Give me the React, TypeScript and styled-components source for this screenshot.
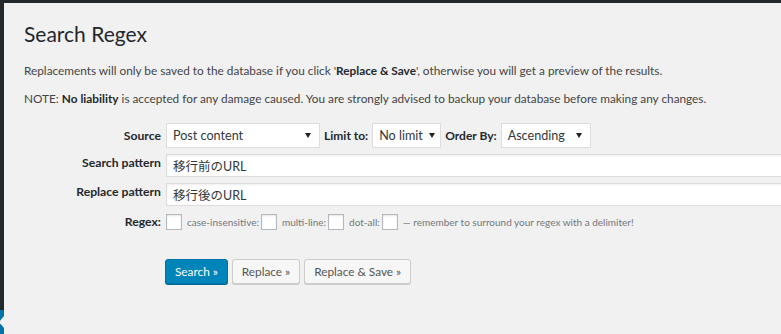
import styled, { createGlobalStyle } from "styled-components";

const GlobalStyle = createGlobalStyle`
  html, body {
    margin: 0;
    height: 100%;
    overflow: hidden;
    background: #f1f1f1;
  }
  body {
    font-family: Lato, "Noto Sans CJK JP", sans-serif;
    font-size: 11.8px;
    color: #444;
  }
  #root {
    height: 100%;
  }
`;

const Page = styled.div`
  display: flex;
  flex-direction: column;
  height: 100%;
`;

const AdminBar = styled.div`
  height: 3px;
  background: #23282d;
  flex: none;
`;

const Body = styled.div`
  display: flex;
  flex: 1;
  min-height: 0;
`;

const Sidebar = styled.div`
  width: 4px;
  flex: none;
  background: #23282d;
  display: flex;
  flex-direction: column;
  justify-content: flex-end;
`;

const CurrentItem = styled.div`
  height: 24px;
  background: #0073aa;
  position: relative;

  &::after {
    content: "";
    position: absolute;
    right: 0;
    top: 6px;
    border: 6px solid transparent;
    border-right-color: #f1f1f1;
    border-left-width: 0;
    border-right-width: 5px;
  }
`;

const Content = styled.main`
  flex: 1;
  min-width: 0;
  padding: 0 0 0 20px;
  overflow: hidden;
`;

const Title = styled.h1`
  margin: 17px 0 14px;
  font-size: 21px;
  font-weight: 400;
  line-height: 28px;
  color: #23282d;
`;

const Note = styled.p`
  margin: 0 0 10px;
  line-height: 18px;

  strong {
    font-weight: 700;
    color: #23282d;
  }
`;

const Form = styled.div`
  display: grid;
  grid-template-columns: 137px 1fr;
  column-gap: 5px;
  row-gap: 6px;
  margin-top: 15px;
`;

const Label = styled.label<{ $shift?: number }>`
  justify-self: end;
  align-self: start;
  padding-top: ${({ $shift }) => $shift ?? 0}px;
  font-size: 12.2px;
  font-weight: 700;
  color: #23282d;
  line-height: 18px;
  white-space: nowrap;
`;

const Field = styled.div<{ $gap?: number }>`
  display: flex;
  align-items: center;
  gap: ${({ $gap }) => $gap ?? 4}px;
  min-width: 0;
`;

const InlineLabel = styled.span`
  font-size: 12px;
  font-weight: 700;
  color: #23282d;
  white-space: nowrap;
`;

const Select = styled.div<{ $width: number }>`
  width: ${({ $width }) => $width}px;
  height: 25px;
  box-sizing: border-box;
  display: flex;
  align-items: center;
  justify-content: space-between;
  padding: 0 8px 0 6px;
  background: #fff;
  border: 1px solid #ddd;
  font-size: 12.6px;
  color: #32373c;
  white-space: nowrap;
`;

const Caret = styled.span`
  width: 0;
  height: 0;
  margin-left: 6px;
  border-left: 3px solid transparent;
  border-right: 3px solid transparent;
  border-top: 5px solid #222;
`;

const TextInput = styled.div`
  width: 700px;
  flex: none;
  height: 23px;
  box-sizing: border-box;
  display: flex;
  align-items: center;
  padding: 0 6px;
  background: #fff;
  border: 1px solid #ddd;
  box-shadow: inset 0 1px 2px rgba(0, 0, 0, 0.07);
  font-size: 12.5px;
  color: #32373c;
`;

const Check = styled.span`
  width: 16px;
  height: 16px;
  box-sizing: border-box;
  flex: none;
  background: #fff;
  border: 1px solid #b4b9be;
  box-shadow: inset 0 1px 2px rgba(0, 0, 0, 0.1);
`;

const Hint = styled.span`
  font-size: 10px;
  color: #72777c;
  white-space: nowrap;
  margin: 0 2px 0 5px;
`;

const Buttons = styled.div`
  display: flex;
  gap: 4px;
  margin: 22px 0 0 -1px;
`;

const Button = styled.button<{ $primary?: boolean }>`
  height: 25px;
  box-sizing: border-box;
  padding: 0 9px;
  border-radius: 3px;
  font-family: inherit;
  font-size: 11.8px;
  line-height: 23px;
  cursor: pointer;
  border: 1px solid ${({ $primary }) => ($primary ? "#0073aa" : "#ccc")};
  background: ${({ $primary }) => ($primary ? "#0085ba" : "#f7f7f7")};
  color: ${({ $primary }) => ($primary ? "#fff" : "#555")};
  box-shadow: ${({ $primary }) => ($primary ? "0 1px 0 #006799" : "0 1px 0 #ccc")};
`;

export default function App() {
  return (
    <Page>
      <GlobalStyle />
      <AdminBar />
      <Body>
        <Sidebar>
          <CurrentItem />
        </Sidebar>
        <Content>
          <Title>Search Regex</Title>
          <Note>
            Replacements will only be saved to the database if you click '<strong>Replace &amp; Save</strong>', otherwise you will get a preview of the results.
          </Note>
          <Note>
            NOTE: <strong>No liability</strong> is accepted for any damage caused. You are strongly advised to backup your database before making any changes.
          </Note>
          <Form>
            <Label $shift={4}>Source</Label>
            <Field>
              <Select $width={154}>
                Post content <Caret />
              </Select>
              <InlineLabel>Limit to:</InlineLabel>
              <Select $width={69}>
                No limit <Caret />
              </Select>
              <InlineLabel>Order By:</InlineLabel>
              <Select $width={90}>
                Ascending <Caret />
              </Select>
            </Field>

            <Label>Search pattern</Label>
            <Field>
              <TextInput>移行前のURL</TextInput>
            </Field>

            <Label>Replace pattern</Label>
            <Field>
              <TextInput>移行後のURL</TextInput>
            </Field>

            <Label $shift={1}>Regex:</Label>
            <Field $gap={0}>
              <Check />
              <Hint>case-insensitive:</Hint>
              <Check />
              <Hint>multi-line:</Hint>
              <Check />
              <Hint>dot-all:</Hint>
              <Check />
              <Hint>— remember to surround your regex with a delimiter!</Hint>
            </Field>

            <span />
            <Buttons>
              <Button $primary>Search »</Button>
              <Button>Replace »</Button>
              <Button>Replace &amp; Save »</Button>
            </Buttons>
          </Form>
        </Content>
      </Body>
    </Page>
  );
}
